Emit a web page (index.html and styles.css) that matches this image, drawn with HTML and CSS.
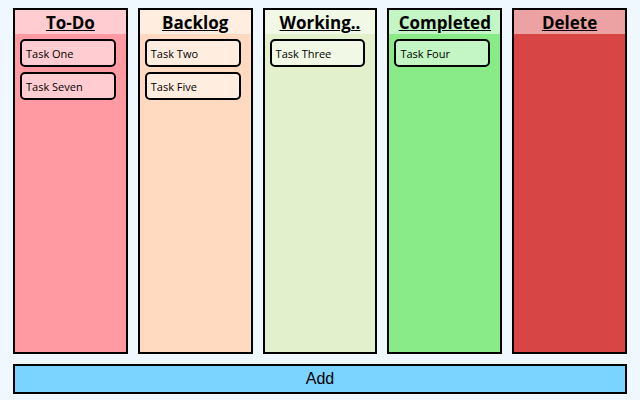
FILE: index.html
```html
<!DOCTYPE html>
<html lang="en">
<head>
<meta charset="utf-8">
<title>Task Board</title>
<link rel="stylesheet" href="styles.css">
</head>
<body>
<main class="board">
  <section class="column todo">
    <h2 class="title">To-Do</h2>
    <ul class="tasks"><li class="task">Task One</li><li class="task">Task Seven</li></ul>
  </section>
  <section class="column backlog">
    <h2 class="title">Backlog</h2>
    <ul class="tasks"><li class="task">Task Two</li><li class="task">Task Five</li></ul>
  </section>
  <section class="column working">
    <h2 class="title">Working..</h2>
    <ul class="tasks"><li class="task">Task Three</li></ul>
  </section>
  <section class="column completed">
    <h2 class="title">Completed</h2>
    <ul class="tasks"><li class="task">Task Four</li></ul>
  </section>
  <section class="column delete">
    <h2 class="title">Delete</h2>
    <ul class="tasks"></ul>
  </section>
</main>
<button class="add" type="button">Add</button>
</body>
</html>
```
FILE: styles.css
```css
* { box-sizing: border-box; }
body {
  margin: 0;
  min-height: 100vh;
  padding: 8px 13px 6px;
  display: flex;
  flex-direction: column;
  gap: 10px;
  background: #f0f8ff;
  color: #000;
  font-family: "Open Sans", "Noto Sans", sans-serif;
}
.board {
  flex: 1;
  display: grid;
  grid-template-columns: repeat(5, minmax(0, 1fr));
  gap: 10px;
}
.column { border: 2px solid #000; }
.title {
  margin: 0;
  padding-top: 2px;
  background: rgba(255, 255, 255, 0.5);
  font-size: 17px;
  line-height: 22px;
  font-weight: 700;
  text-align: center;
  text-decoration: underline 1px;
}
.tasks {
  list-style: none;
  margin: 0;
  padding: 5px 10px 5px 5px;
  display: flex;
  flex-direction: column;
  gap: 5px;
}
.task {
  padding: 2px 4px 0;
  border: 2px solid #000;
  border-radius: 5px;
  background: rgba(255, 255, 255, 0.5);
  font-size: 11px;
  line-height: 22px;
}
.todo { background: #ff9aa2; }
.backlog { background: #ffdac1; }
.working { background: #e2f0cb; }
.completed { background: #88eb88; }
.delete { background: #d84545; }
.add {
  padding: 0;
  border: 2px solid #000;
  background: #7bd3ff;
  color: #000;
  font-family: "Liberation Sans", Arial, sans-serif;
  font-size: 16px;
  line-height: 26px;
}
```
